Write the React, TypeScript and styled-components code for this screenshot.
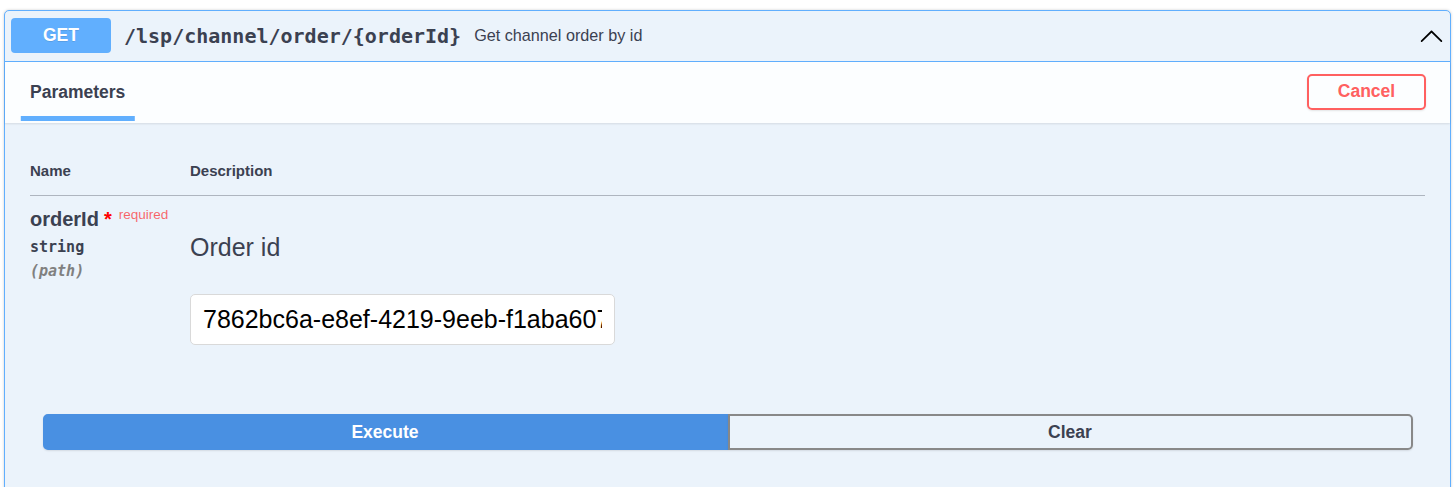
import React from "react";
import styled, { createGlobalStyle } from "styled-components";

const GlobalStyle = createGlobalStyle`
  html, body { margin: 0; padding: 0; background: #ffffff; }
  body { font-family: "Liberation Sans", Arial, sans-serif; color: #3b4151; }
  * { box-sizing: border-box; }
`;

const Page = styled.div`
  padding: 10px 3px 0 4px;
`;

const Opblock = styled.div`
  border: 1px solid #61affe;
  border-radius: 5px;
  background: #ebf3fb;
  box-shadow: 0 0 3px rgba(0, 0, 0, 0.19);
`;

const Summary = styled.div`
  display: flex;
  align-items: center;
  height: 51px;
  padding: 0 6px 1px;
  border-bottom: 1px solid #61affe;
`;

const Method = styled.span`
  width: 100px;
  height: 35px;
  display: flex;
  align-items: center;
  justify-content: center;
  background: #61affe;
  border-radius: 4px;
  color: #fff;
  font-size: 17.5px;
  font-weight: 700;
  text-shadow: 0 1px 0 rgba(0, 0, 0, 0.1);
`;

const Path = styled.span`
  padding: 0 13px 0 13px;
  font-family: "DejaVu Sans Mono", monospace;
  font-weight: 700;
  font-size: 20px;
  color: #3b4151;
`;

const Desc = styled.span`
  flex: 1;
  font-size: 16.2px;
  color: #3b4151;
`;

const Arrow = styled.svg`
  width: 25px;
  height: 25px;
  flex: none;
`;

const SectionHeader = styled.div`
  display: flex;
  align-items: center;
  justify-content: space-between;
  height: 61px;
  padding: 0 24px 2px 25px;
  background: rgba(255, 255, 255, 0.85);
  box-shadow: 0 1px 2px rgba(0, 0, 0, 0.1);
`;

const TabTitle = styled.h4`
  margin: 0;
  font-size: 17.5px;
  font-weight: 700;
  color: #3b4151;
  position: relative;
  line-height: 20px;

  &::after {
    content: "";
    position: absolute;
    left: 50%;
    bottom: -19px;
    width: 120%;
    height: 5px;
    transform: translateX(-50%);
    background: #61affe;
  }
`;

const CancelButton = styled.button`
  width: 119px;
  height: 36px;
  border: 2px solid #ff6060;
  border-radius: 5px;
  background: transparent;
  color: #ff6060;
  font-family: "Liberation Sans", Arial, sans-serif;
  font-size: 17.5px;
  font-weight: 700;
  box-shadow: 0 1px 2px rgba(0, 0, 0, 0.1);
`;

const TableWrap = styled.div`
  padding: 26px 25px 0 25px;
`;

const Table = styled.div`
  display: grid;
  grid-template-columns: 160px 1fr;
`;

const HeadCell = styled.div`
  padding: 13px 0 16px;
  font-size: 15px;
  font-weight: 700;
  line-height: 17px;
  color: #3b4151;
  border-bottom: 1px solid rgba(59, 65, 81, 0.35);
`;

const NameCell = styled.div`
  padding: 12px 0 12px;
  display: flex;
  flex-direction: column;
`;

const ParamName = styled.div`
  font-size: 20px;
  font-weight: 700;
  line-height: 23px;
  color: #3b4151;
`;

const Star = styled.span`
  color: red;
  font-size: 20px;
  margin-left: 5px;
`;

const Required = styled.span`
  color: rgba(255, 0, 0, 0.6);
  font-size: 13.5px;
  font-weight: 400;
  padding-left: 7px;
  position: relative;
  top: -7px;
`;

const ParamType = styled.div<{ $muted?: boolean }>`
  font-family: "DejaVu Sans Mono", monospace;
  font-size: 15px;
  font-weight: 700;
  font-style: ${(p) => (p.$muted ? "italic" : "normal")};
  color: ${(p) => (p.$muted ? "#808080" : "#3b4151")};
  line-height: 18px;
  padding-top: ${(p) => (p.$muted ? "6px" : "5px")};
`;

const DescCell = styled.div`
  padding: 12px 0 12px;
`;

const DescText = styled.p`
  margin: 25px 0 0;
  font-size: 25px;
  line-height: 29px;
  color: #3b4151;
`;

const Input = styled.input`
  display: block;
  margin-top: 32px;
  width: 425px;
  height: 51px;
  padding: 0 12px;
  border: 1px solid #d9d9d9;
  border-radius: 5px;
  background: #fff;
  font-family: "Liberation Sans", Arial, sans-serif;
  font-size: 25px;
  color: #000;
  outline: none;
`;

const BtnGroup = styled.div`
  display: flex;
  padding: 57px 37.5px 45px;
`;

const ActionButton = styled.button<{ $primary?: boolean }>`
  flex: 1;
  height: 36px;
  font-family: "Liberation Sans", Arial, sans-serif;
  font-size: 17.5px;
  font-weight: 700;
  border: 2px solid ${(p) => (p.$primary ? "#4990e2" : "#888888")};
  background: ${(p) => (p.$primary ? "#4990e2" : "transparent")};
  color: ${(p) => (p.$primary ? "#ffffff" : "#3b4151")};
  border-radius: ${(p) => (p.$primary ? "5px 0 0 5px" : "0 5px 5px 0")};
  box-shadow: 0 1px 2px rgba(0, 0, 0, 0.1);
`;

export default function App() {
  return (
    <>
      <GlobalStyle />
      <Page>
        <Opblock>
          <Summary>
            <Method>GET</Method>
            <Path>/lsp/channel/order/{"{orderId}"}</Path>
            <Desc>Get channel order by id</Desc>
            <Arrow viewBox="0 0 20 20" aria-hidden="true">
              <path
                fill="#000"
                d="M17.418 14.908c.272.268.709.268.979 0s.271-.701 0-.969l-7.908-7.83c-.27-.268-.707-.268-.979 0l-7.908 7.83c-.27.268-.27.701 0 .969.271.268.709.268.979 0L10 7.767l7.418 7.141z"
              />
            </Arrow>
          </Summary>
          <SectionHeader>
            <TabTitle>
              <span>Parameters</span>
            </TabTitle>
            <CancelButton>Cancel</CancelButton>
          </SectionHeader>
          <TableWrap>
            <Table>
              <HeadCell>Name</HeadCell>
              <HeadCell>Description</HeadCell>
              <NameCell>
                <ParamName>
                  orderId<Star>*</Star>
                  <Required>required</Required>
                </ParamName>
                <ParamType>string</ParamType>
                <ParamType $muted>(path)</ParamType>
              </NameCell>
              <DescCell>
                <DescText>Order id</DescText>
                <Input defaultValue="7862bc6a-e8ef-4219-9eeb-f1aba6071c2d" />
              </DescCell>
            </Table>
          </TableWrap>
          <BtnGroup>
            <ActionButton $primary>Execute</ActionButton>
            <ActionButton>Clear</ActionButton>
          </BtnGroup>
        </Opblock>
      </Page>
    </>
  );
}
